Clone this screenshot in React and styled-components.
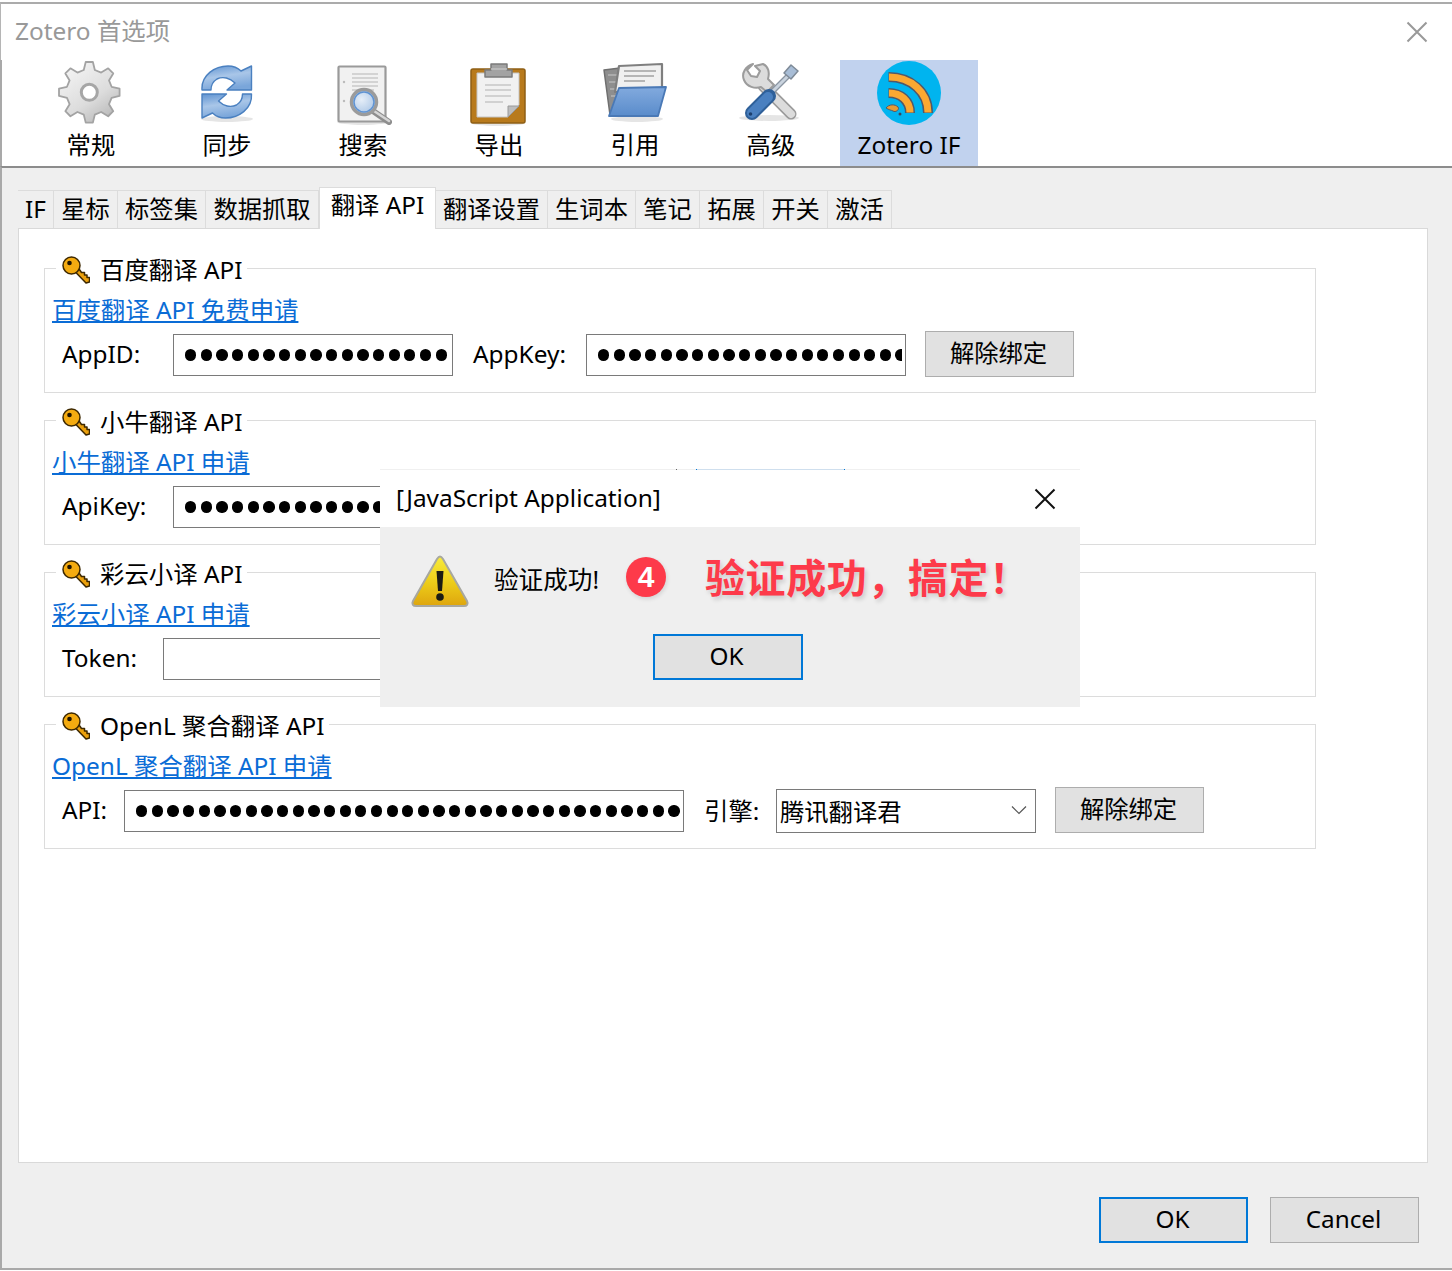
import React from "react";
import styled, { createGlobalStyle } from "styled-components";

const Global = createGlobalStyle`
  html, body { margin: 0; padding: 0; background: #fff; }
  body { font-family: "Noto Sans", "Noto Sans CJK SC", sans-serif; color: #000; }
  * { box-sizing: border-box; }
`;

const Page = styled.div`
  position: relative;
  width: 1452px;
  height: 1271px;
  padding-top: 2px;
  display: flex;
  flex-direction: column;
  background: #fff;
  overflow: hidden;
`;
const TitleBar = styled.header`
  height: 58px;
  flex: none;
  border-top: 2px solid #ababab;
  border-left: 1px solid #b5b5b5;
  display: flex;
  align-items: center;
  justify-content: space-between;
  padding: 0 24px 0 14px;
  font-size: 24.4px;
  color: #999;
`;
const TitleText = styled.span`
  line-height: 56px;
  height: 58px;
`;
const Toolbar = styled.nav`
  height: 106px;
  flex: none;
  display: flex;
  padding-left: 21px;
  border-left: 2px solid #a9a9a9;
`;
const ToolItem = styled.div`
  width: ${(p) => (p.$active ? "138px" : "136px")};
  margin-left: ${(p) => (p.$active ? "1px" : "0")};
  display: flex;
  flex-direction: column;
  align-items: center;
  background: ${(p) => (p.$active ? "#c1d2ee" : "transparent")};
`;
const ToolIcon = styled.svg`
  width: 64px;
  height: 64px;
  flex: none;
  overflow: visible;
  filter: blur(0.5px);
`;
const ToolLabel = styled.span`
  height: 42px;
  line-height: 41px;
  font-size: 24.4px;
`;
const Body = styled.main`
  flex: 1;
  display: flex;
  flex-direction: column;
  background: #efefef;
  border-top: 2px solid #8c8c8c;
  border-left: 2px solid #a9a9a9;
  border-bottom: 2px solid #a9a9a9;
  margin-bottom: 1px;
  padding: 18px 0 0 16px;
`;
const TabRow = styled.div`
  display: flex;
  align-items: flex-end;
  height: 42px;
  flex: none;
`;
const Tab = styled.div`
  height: ${(p) => (p.$active ? "42px" : "38px")};
  line-height: ${(p) => (p.$active ? "33px" : "36px")};
  font-size: 24.3px;
  white-space: nowrap;
  background: ${(p) => (p.$active ? "#fff" : "transparent")};
  border-top: 1px solid #dcdcdc;
  border-right: 1px solid #dcdcdc;
  border-left: ${(p) => (p.$active ? "1px solid #dcdcdc" : "none")};
  margin-bottom: ${(p) => (p.$active ? "-1px" : "0")};
  position: relative;
  width: ${(p) => p.$w}px;
  text-align: center;
`;
const Panel = styled.section`
  width: 1410px;
  height: 935px;
  flex: none;
  background: #fff;
  border: 1px solid #d9d9d9;
  padding: 24px 0 0 25px;
  display: flex;
  flex-direction: column;
  gap: 12px;
`;
const Group = styled.fieldset`
  width: 1272px;
  height: 140px;
  margin: 0;
  padding: 0 7px 0 7px;
  min-width: 0;
  border: 1px solid #dcdcdc;
  flex: none;
`;
const Legend = styled.legend`
  height: 31px;
  margin-left: 4px;
  padding: 2px 4px 0 6px;
  display: flex;
  align-items: center;
  gap: 10px;
  font-size: 24.4px;
  line-height: 29px;
`;
const KeySvg = styled.svg`
  width: 28px;
  height: 28px;
  flex: none;
`;
const ApiLink = styled.a`
  display: block;
  height: 32px;
  margin-top: 10px;
  margin-bottom: 5px;
  line-height: 32px;
  font-size: 24.4px;
  color: #0a6cd6;
  text-decoration: underline;
  text-underline-offset: 2px;
  width: fit-content;
`;
const Row = styled.div`
  display: flex;
  align-items: center;
  height: 48px;
  padding-left: 10px;
`;
const Label = styled.label`
  flex: none;
  width: ${(p) => p.$w}px;
  margin-left: ${(p) => p.$ml || 0}px;
  padding-bottom: 3px;
  font-size: 24.4px;
`;
const Field = styled.div`
  flex: none;
  width: ${(p) => p.$w}px;
  height: 42px;
  border: 1px solid #7a7a7a;
  background: #fff;
  padding: 0 3px 0 11px;
  display: flex;
  align-items: center;
`;
const Dots = styled.div`
  flex: 1;
  overflow: hidden;
  display: flex;
  gap: 4.37px;
`;
const Dot = styled.i`
  flex: none;
  width: 11.3px;
  height: 11.3px;
  border-radius: 50%;
  background: #000;
`;
const Select = styled.div`
  flex: none;
  width: 260px;
  height: 44px;
  border: 1px solid #7a7a7a;
  padding: 0 8px 2px 3px;
  display: flex;
  align-items: center;
  justify-content: space-between;
  font-size: 24.3px;
`;
const Button = styled.button`
  flex: none;
  align-self: flex-start;
  width: ${(p) => p.$w || 149}px;
  height: 46px;
  margin-left: ${(p) => p.$ml || 0}px;
  padding: 0 2px 2px 0;
  background: #e1e1e1;
  border: ${(p) => (p.$primary ? "2px solid #0078d7" : "1.5px solid #adadad")};
  font-family: inherit;
  font-size: 24.3px;
  line-height: 38px;
  color: #000;
`;
const Footer = styled.footer`
  display: flex;
  justify-content: flex-end;
  gap: 22px;
  padding: 34px 33px 0 0;
`;
const Dialog = styled.div`
  position: absolute;
  left: 380px;
  top: 469px;
  width: 700px;
  height: 238px;
  background: #efefef;
  display: flex;
  flex-direction: column;
`;
const Residue = styled.div`
  height: 1px;
  flex: none;
  display: flex;
  background: #f0f0f0;
`;
const ResidueTick = styled.i`
  flex: none;
  margin-left: ${(p) => p.$ml}px;
  width: ${(p) => p.$w}px;
  background: ${(p) => p.$c};
`;
const DialogHead = styled.div`
  height: 57px;
  flex: none;
  background: #fff;
  display: flex;
  align-items: center;
  justify-content: space-between;
  padding: 0 24px 0 16px;
  font-size: 24.4px;
`;
const DialogTitle = styled.span`
  padding-bottom: 3px;
`;
const CloseIcon = styled.svg`
  width: ${(p) => p.$s}px;
  height: ${(p) => p.$s}px;
  flex: none;
`;
const DialogMain = styled.div`
  height: 107px;
  flex: none;
  display: flex;
  align-items: flex-start;
  padding: 27px 0 0 30px;
`;
const WarnIcon = styled.svg`
  width: 60px;
  height: 54px;
  flex: none;
`;
const DialogText = styled.span`
  margin: 0 0 0 24px;
  width: 132px;
  flex: none;
  font-size: 24.6px;
  line-height: 52px;
`;
const Badge = styled.span`
  flex: none;
  width: 40px;
  height: 40px;
  margin-top: 3px;
  border-radius: 50%;
  background: #fd3a4a;
  color: #fff;
  font-family: "Liberation Sans", sans-serif;
  font-weight: 700;
  font-size: 30px;
  line-height: 40px;
  text-align: center;
  box-shadow: 1px 2px 4px rgba(0, 0, 0, 0.12);
`;
const Callout = styled.span`
  margin-left: 39px;
  font-family: "Noto Sans CJK SC", sans-serif;
  font-weight: 600;
  font-size: 40px;
  letter-spacing: 0.6px;
  line-height: 44px;
  color: #fd3a4a;
  white-space: nowrap;
  text-shadow: 2px 3px 4px rgba(0, 0, 0, 0.15);
`;
const DialogFoot = styled.div`
  display: flex;
  justify-content: center;
  padding-right: 5px;
`;

const Key = () => (
  <KeySvg viewBox="0 0 28 28">
    <path d="M12 14.500 L24 27 L27.500 26 L27.500 21.500 L25 21.500 L25 19 L22.500 19 L22.500 16.500 L19.500 16.500 L16 11.500 Z" fill="#eba00c" stroke="#3d2800" strokeWidth="1.500" strokeLinejoin="round" />
    <circle cx="9.500" cy="9.500" r="8.500" fill="#f4ab10" stroke="#3d2800" strokeWidth="1.500" />
    <circle cx="7.500" cy="7" r="2.300" fill="#1f1300" />
  </KeySvg>
);

const gearPath = (() => {
  const cx = 30.3, cy = 32.3, n = 8, R = 30.5, r = 23;
  const pts = [];
  for (let i = 0; i < n; i++) {
    const a = (i / n) * Math.PI * 2 - Math.PI / 2;
    const s = Math.PI / n;
    [[-0.62, r], [-0.3, R], [0.3, R], [0.62, r]].forEach(([k, rad]) => {
      const t = a + k * s;
      pts.push(`${(cx + rad * Math.cos(t)).toFixed(2)} ${(cy + rad * Math.sin(t)).toFixed(2)}`);
    });
  }
  return "M" + pts.join("L") + "Z";
})();

const Defs = () => (
  <svg width="0" height="0" style={{ position: "absolute" }}>
    <defs>
      <linearGradient id="gearG" x1="0.15" y1="0" x2="0.85" y2="1">
        <stop offset="0" stopColor="#f6f6f6" />
        <stop offset="0.6" stopColor="#dcdcdc" />
        <stop offset="1" stopColor="#b4b4b4" />
      </linearGradient>
      <linearGradient id="syncG" x1="0" y1="0" x2="0.3" y2="1">
        <stop offset="0" stopColor="#5f93d1" />
        <stop offset="0.5" stopColor="#a9c6e8" />
        <stop offset="1" stopColor="#7aa6da" />
      </linearGradient>
      <linearGradient id="folderG" x1="0" y1="0" x2="0" y2="1">
        <stop offset="0" stopColor="#82aade" />
        <stop offset="1" stopColor="#5a8ccb" />
      </linearGradient>
      <linearGradient id="warnG" x1="0" y1="0" x2="0" y2="1">
        <stop offset="0" stopColor="#f8ec3c" />
        <stop offset="0.55" stopColor="#eccb18" />
        <stop offset="1" stopColor="#dea50e" />
      </linearGradient>
      <radialGradient id="lensG" cx="0.4" cy="0.4" r="0.7">
        <stop offset="0" stopColor="#e6eef8" />
        <stop offset="1" stopColor="#a5c2e4" />
      </radialGradient>
    </defs>
  </svg>
);

const Shadow = ({ cx, cy = 60, rx }) => <ellipse cx={cx} cy={cy} rx={rx} ry="3" fill="#000" opacity="0.1" />;

const GearIcon = () => (
  <ToolIcon viewBox="0 0 64 64">
    <path d={gearPath} fill="url(#gearG)" stroke="#a3a3a3" strokeWidth="1.800" strokeLinejoin="round" />
    <circle cx="30.3" cy="32.3" r="8" fill="#fff" stroke="#a6a6a6" strokeWidth="3" />
  </ToolIcon>
);
const SyncIcon = () => (
  <ToolIcon viewBox="0 0 64 64">
    <Shadow cx={32} cy={59} rx={26} />
    <g fill="url(#syncG)" stroke="#4a80c0" strokeWidth="1.400" strokeLinejoin="round">
      <path d="M7 30 C6 15 20 6 33 6 C38 6 43 8 46 11 L56.500 6 L56.500 30 L32 30 L40 23 C35 18 28 16 22 19 C17 22 16 26 16 30 Z" />
      <path d="M56.500 34 C57.500 49 43.500 58 30.500 58 C25.500 58 20.500 56 17.500 53 L7 58 L7 34 L31.500 34 L23.500 41 C28.500 46 35.500 48 41.500 45 C46.500 42 47.500 38 47.500 34 Z" />
    </g>
  </ToolIcon>
);
const SearchIcon = () => (
  <ToolIcon viewBox="0 0 64 64">
    <Shadow cx={32} cy={62} rx={26} />
    <rect x="7.500" y="6.500" width="47" height="55" fill="#f1f1f1" stroke="#9a9a9a" strokeWidth="2.200" rx="1" />
    <g stroke="#c9c9c9" strokeWidth="1.600">
      <path d="M21 14h26M21 18h26M21 22h26M21 26h26M21 30h22" />
    </g>
    <circle cx="13" cy="22" r="1.200" fill="#bbb" />
    <circle cx="13" cy="41" r="1.200" fill="#bbb" />
    <path d="M42 51 L58 62" stroke="#8e8e8e" strokeWidth="6" strokeLinecap="round" />
    <path d="M43 51 L58 61" stroke="#d6d6d6" strokeWidth="2.500" strokeLinecap="round" />
    <circle cx="33" cy="42" r="12.500" fill="url(#lensG)" stroke="#9b9b9b" strokeWidth="3.500" />
    <circle cx="33" cy="42" r="10" fill="none" stroke="#5f93d3" strokeWidth="1.500" />
  </ToolIcon>
);
const ClipIcon = () => (
  <ToolIcon viewBox="0 0 64 64">
    <Shadow cx={31} cy={63} rx={27} />
    <rect x="4" y="9" width="54" height="54" rx="2" fill="#b87a1c" stroke="#8f5f14" strokeWidth="1.500" />
    <path d="M10 13 H52 V45 L41 57 H10 Z" fill="#f1f1f1" stroke="#c4c4c4" />
    <path d="M41 57 V46 H52 Z" fill="#bdbdbd" stroke="#9a9a9a" />
    <g stroke="#c6c6c6" strokeWidth="1.700">
      <path d="M18 25h26M18 30h26M18 36h26M18 42h18" />
    </g>
    <path d="M18 17 V10 H24 V4 H40 V10 H45 V17 Z" fill="#a3a3a3" stroke="#7b7b7b" strokeWidth="1.500" strokeLinejoin="round" />
    <path d="M24 9h16" stroke="#c2c2c2" strokeWidth="1.500" />
  </ToolIcon>
);
const FolderIcon = () => (
  <ToolIcon viewBox="0 0 64 64">
    <Shadow cx={34} cy={59} rx={26} />
    <path d="M1 10 L17 8 L14 50 L7 55 Z" fill="#8e8e8e" stroke="#6f6f6f" strokeWidth="1.500" strokeLinejoin="round" />
    <path d="M5 15 H14 M6 22 H14 M7 29 H13 M8 36 H13" stroke="#b5b5b5" strokeWidth="1.500" />
    <path d="M16 6 L59 4 L59 29 L12 32 Z" fill="#f0f0f0" stroke="#7f7f7f" strokeWidth="2.200" strokeLinejoin="round" />
    <path d="M21 11 H53 M21 16 H51 M21 21 H42" stroke="#b5b5b5" strokeWidth="1.800" />
    <path d="M16 28 L63 27 L55 56 L6 56 Z" fill="url(#folderG)" stroke="#4a79b6" strokeWidth="1.800" strokeLinejoin="round" />
  </ToolIcon>
);
const ToolsIcon = () => (
  <ToolIcon viewBox="0 0 64 64">
    <Shadow cx={30} cy={58} rx={30} />
    <path d="M24 26 L52 54" stroke="#9a9a9a" strokeWidth="11" strokeLinecap="round" />
    <path d="M24 26 L52 54" stroke="#dcdcdc" strokeWidth="8" strokeLinecap="round" />
    <path d="M14 4 C7 6 2 13 5 20 C8 27 16 29 22 27 L28 32 L35 25 L29 19 C31 12 29 6 24 4 L16 6 L21 11 L18 17 L12 16 L8 10 Z" fill="#dcdcdc" stroke="#9c9c9c" strokeWidth="2" strokeLinejoin="round" />
    <path d="M50 15 L28 37" stroke="#8a95a1" strokeWidth="5.500" />
    <path d="M50 15 L28 37" stroke="#c9d3de" strokeWidth="3" />
    <path d="M45 13 L52 5 L59 11 L52 19 Z" fill="#a8bdd6" stroke="#7e8a97" strokeWidth="1.500" strokeLinejoin="round" />
    <path d="M30 36 L13 53" stroke="#2f6099" strokeWidth="14" strokeLinecap="round" />
    <path d="M29 37 L13 53" stroke="#4a80c0" strokeWidth="10" strokeLinecap="round" />
    <circle cx="11.500" cy="54" r="1.800" fill="#1c3f6e" />
  </ToolIcon>
);
const RssIcon = () => (
  <ToolIcon viewBox="0 0 64 64">
    <circle cx="32" cy="33" r="32" fill="#00b4ef" />
    <g fill="none" strokeLinecap="butt">
      <path d="M11.500 17 C34 17 51 32 51 53" stroke="#50596a" strokeWidth="10" />
      <path d="M12 17 C34 17 51 32 51 52.500" stroke="#fba832" strokeWidth="7" />
      <path d="M11.500 33 C24 33 33 41 33 53" stroke="#50596a" strokeWidth="10" />
      <path d="M12 33 C24 33 33 41 33 52.500" stroke="#fba832" strokeWidth="7" />
    </g>
    <path d="M9 48 C12 44 18 44 21 47 C23 49 19 53 16 51 C14 50 12 50 9 48 Z" fill="#e59b34" stroke="#50596a" />
    <circle cx="23" cy="54" r="1.500" fill="#37475d" />
  </ToolIcon>
);

const TOOLS = [
  ["常规", GearIcon],
  ["同步", SyncIcon],
  ["搜索", SearchIcon],
  ["导出", ClipIcon],
  ["引用", FolderIcon],
  ["高级", ToolsIcon],
];
const TABS = [
  ["IF", 36], ["星标", 64], ["标签集", 88], ["数据抓取", 113], ["翻译 API", 117, true],
  ["翻译设置", 112], ["生词本", 88], ["笔记", 64], ["拓展", 64], ["开关", 64], ["激活", 64],
];

const Secret = ({ w, n }) => (
  <Field $w={w}>
    <Dots>{Array.from({ length: n }, (_, i) => <Dot key={i} />)}</Dots>
  </Field>
);

const X = ({ color, size = 22, width = 2 }) => (
  <CloseIcon $s={size} viewBox="0 0 22 22">
    <path d="M1.500 1.500 L20.500 20.500 M20.500 1.500 L1.500 20.500" stroke={color} strokeWidth={width} fill="none" />
  </CloseIcon>
);

export default function App() {
  return (
    <Page>
      <Global />
      <Defs />
      <TitleBar>
        <TitleText>Zotero 首选项</TitleText>
        <X color="#999" />
      </TitleBar>
      <Toolbar>
        {TOOLS.map(([label, Icon]) => (
          <ToolItem key={label}>
            <Icon />
            <ToolLabel>{label}</ToolLabel>
          </ToolItem>
        ))}
        <ToolItem $active>
          <RssIcon />
          <ToolLabel>Zotero IF</ToolLabel>
        </ToolItem>
      </Toolbar>
      <Body>
        <TabRow>
          {TABS.map(([label, w, active]) => (
            <Tab key={label} $w={w} $active={active}>{label}</Tab>
          ))}
        </TabRow>
        <Panel>
          <Group>
            <Legend><Key />百度翻译 API</Legend>
            <ApiLink>百度翻译 API 免费申请</ApiLink>
            <Row>
              <Label $w={111}>AppID:</Label>
              <Secret w={280} n={17} />
              <Label $w={113} $ml={20}>AppKey:</Label>
              <Secret w={320} n={22} />
              <Button $ml={19}>解除绑定</Button>
            </Row>
          </Group>
          <Group>
            <Legend><Key />小牛翻译 API</Legend>
            <ApiLink>小牛翻译 API 申请</ApiLink>
            <Row>
              <Label $w={111}>ApiKey:</Label>
              <Secret w={500} n={30} />
            </Row>
          </Group>
          <Group>
            <Legend><Key />彩云小译 API</Legend>
            <ApiLink>彩云小译 API 申请</ApiLink>
            <Row>
              <Label $w={101}>Token:</Label>
              <Field $w={500} />
            </Row>
          </Group>
          <Group>
            <Legend><Key />OpenL 聚合翻译 API</Legend>
            <ApiLink>OpenL 聚合翻译 API 申请</ApiLink>
            <Row>
              <Label $w={62}>API:</Label>
              <Secret w={560} n={37} />
              <Label $w={72} $ml={20}>引擎:</Label>
              <Select>
                腾讯翻译君
                <svg width="16" height="10" viewBox="0 0 16 10">
                  <path d="M1 1.500 L8 8.500 L15 1.500" fill="none" stroke="#555" strokeWidth="1.200" />
                </svg>
              </Select>
              <Button $ml={19}>解除绑定</Button>
            </Row>
          </Group>
        </Panel>
        <Footer>
          <Button $primary>OK</Button>
          <Button>Cancel</Button>
        </Footer>
      </Body>
      <Dialog>
        <Residue>
          <ResidueTick $ml={296} $w={1} $c="#666" />
          <ResidueTick $ml={19} $w={1} $c="#0078d7" />
          <ResidueTick $ml={0} $w={147} $c="#cfdfee" />
          <ResidueTick $ml={0} $w={1} $c="#0078d7" />
        </Residue>
        <DialogHead>
          <DialogTitle>[JavaScript Application]</DialogTitle>
          <X color="#111" />
        </DialogHead>
        <DialogMain>
          <WarnIcon viewBox="0 0 60 54">
            <path d="M30 2.500 C31 2.500 32 3.500 33 5 L57 47 C58.500 50 57 52 54 52 H6 C3 52 1.500 50 3 47 L27 5 C28 3.500 29 2.500 30 2.500 Z" fill="url(#warnG)" stroke="#a8a8a0" strokeWidth="2" />
            <path d="M26.500 17 H33.500 L32 37 H28 Z" fill="#1b1b14" />
            <circle cx="30" cy="43" r="3.800" fill="#1b1b14" />
          </WarnIcon>
          <DialogText>验证成功!</DialogText>
          <Badge>4</Badge>
          <Callout>验证成功，搞定！</Callout>
        </DialogMain>
        <DialogFoot>
          <Button $primary $w={150}>OK</Button>
        </DialogFoot>
      </Dialog>
    </Page>
  );
}
